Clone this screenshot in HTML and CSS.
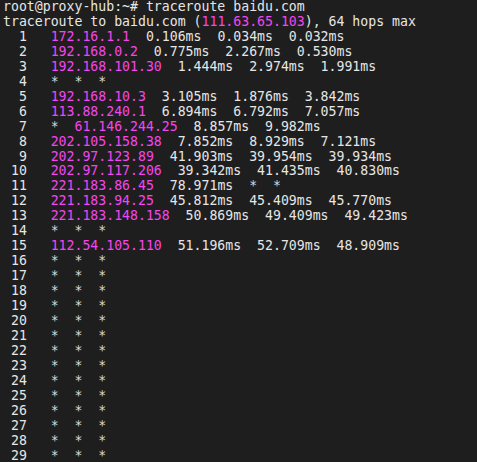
FILE: index.html
```html
<!DOCTYPE html>
<html>
<head>
<meta charset="utf-8">
<link rel="stylesheet" href="styles.css">
</head>
<body>
<pre class="term">root@proxy-hub:~# traceroute baidu.com
traceroute to baidu.com (<span class="ip">111.63.65.103</span>), 64 hops max
  1   <span class="ip">172.16.1.1</span>  0.106ms  0.034ms  0.032ms
  2   <span class="ip">192.168.0.2</span>  0.775ms  2.267ms  0.530ms
  3   <span class="ip">192.168.101.30</span>  1.444ms  2.974ms  1.991ms
  4   <span class="star">*  *  *</span>
  5   <span class="ip">192.168.10.3</span>  3.105ms  1.876ms  3.842ms
  6   <span class="ip">113.88.240.1</span>  6.894ms  6.792ms  7.057ms
  7   <span class="star">*</span>  <span class="ip">61.146.244.25</span>  8.857ms  9.982ms
  8   <span class="ip">202.105.158.38</span>  7.852ms  8.929ms  7.121ms
  9   <span class="ip">202.97.123.89</span>  41.903ms  39.954ms  39.934ms
 10   <span class="ip">202.97.117.206</span>  39.342ms  41.435ms  40.830ms
 11   <span class="ip">221.183.86.45</span>  78.971ms  <span class="star">*  *</span>
 12   <span class="ip">221.183.94.25</span>  45.812ms  45.409ms  45.770ms
 13   <span class="ip">221.183.148.158</span>  50.869ms  49.409ms  49.423ms
 14   <span class="star">*  *  *</span>
 15   <span class="ip">112.54.105.110</span>  51.196ms  52.709ms  48.909ms
 16   <span class="star">*  *  *</span>
 17   <span class="star">*  *  *</span>
 18   <span class="star">*  *  *</span>
 19   <span class="star">*  *  *</span>
 20   <span class="star">*  *  *</span>
 21   <span class="star">*  *  *</span>
 22   <span class="star">*  *  *</span>
 23   <span class="star">*  *  *</span>
 24   <span class="star">*  *  *</span>
 25   <span class="star">*  *  *</span>
 26   <span class="star">*  *  *</span>
 27   <span class="star">*  *  *</span>
 28   <span class="star">*  *  *</span>
 29   <span class="star">*  *  *</span></pre>
</body>
</html>
```

FILE: styles.css
```css
html, body {
  margin: 0;
  padding: 0;
  background: #1e1e1e;
  height: 100%;
  overflow: hidden;
}
.term {
  margin: 0;
  padding: 0 3px;
  font-family: "DejaVu Sans Mono", monospace;
  font-size: 13.2px;
  line-height: 14.95px;
  color: #e6e6e6;
  white-space: pre;
}
.ip {
  color: #f545f0;
}
.star {
  color: #d8d8d8;
}
```
